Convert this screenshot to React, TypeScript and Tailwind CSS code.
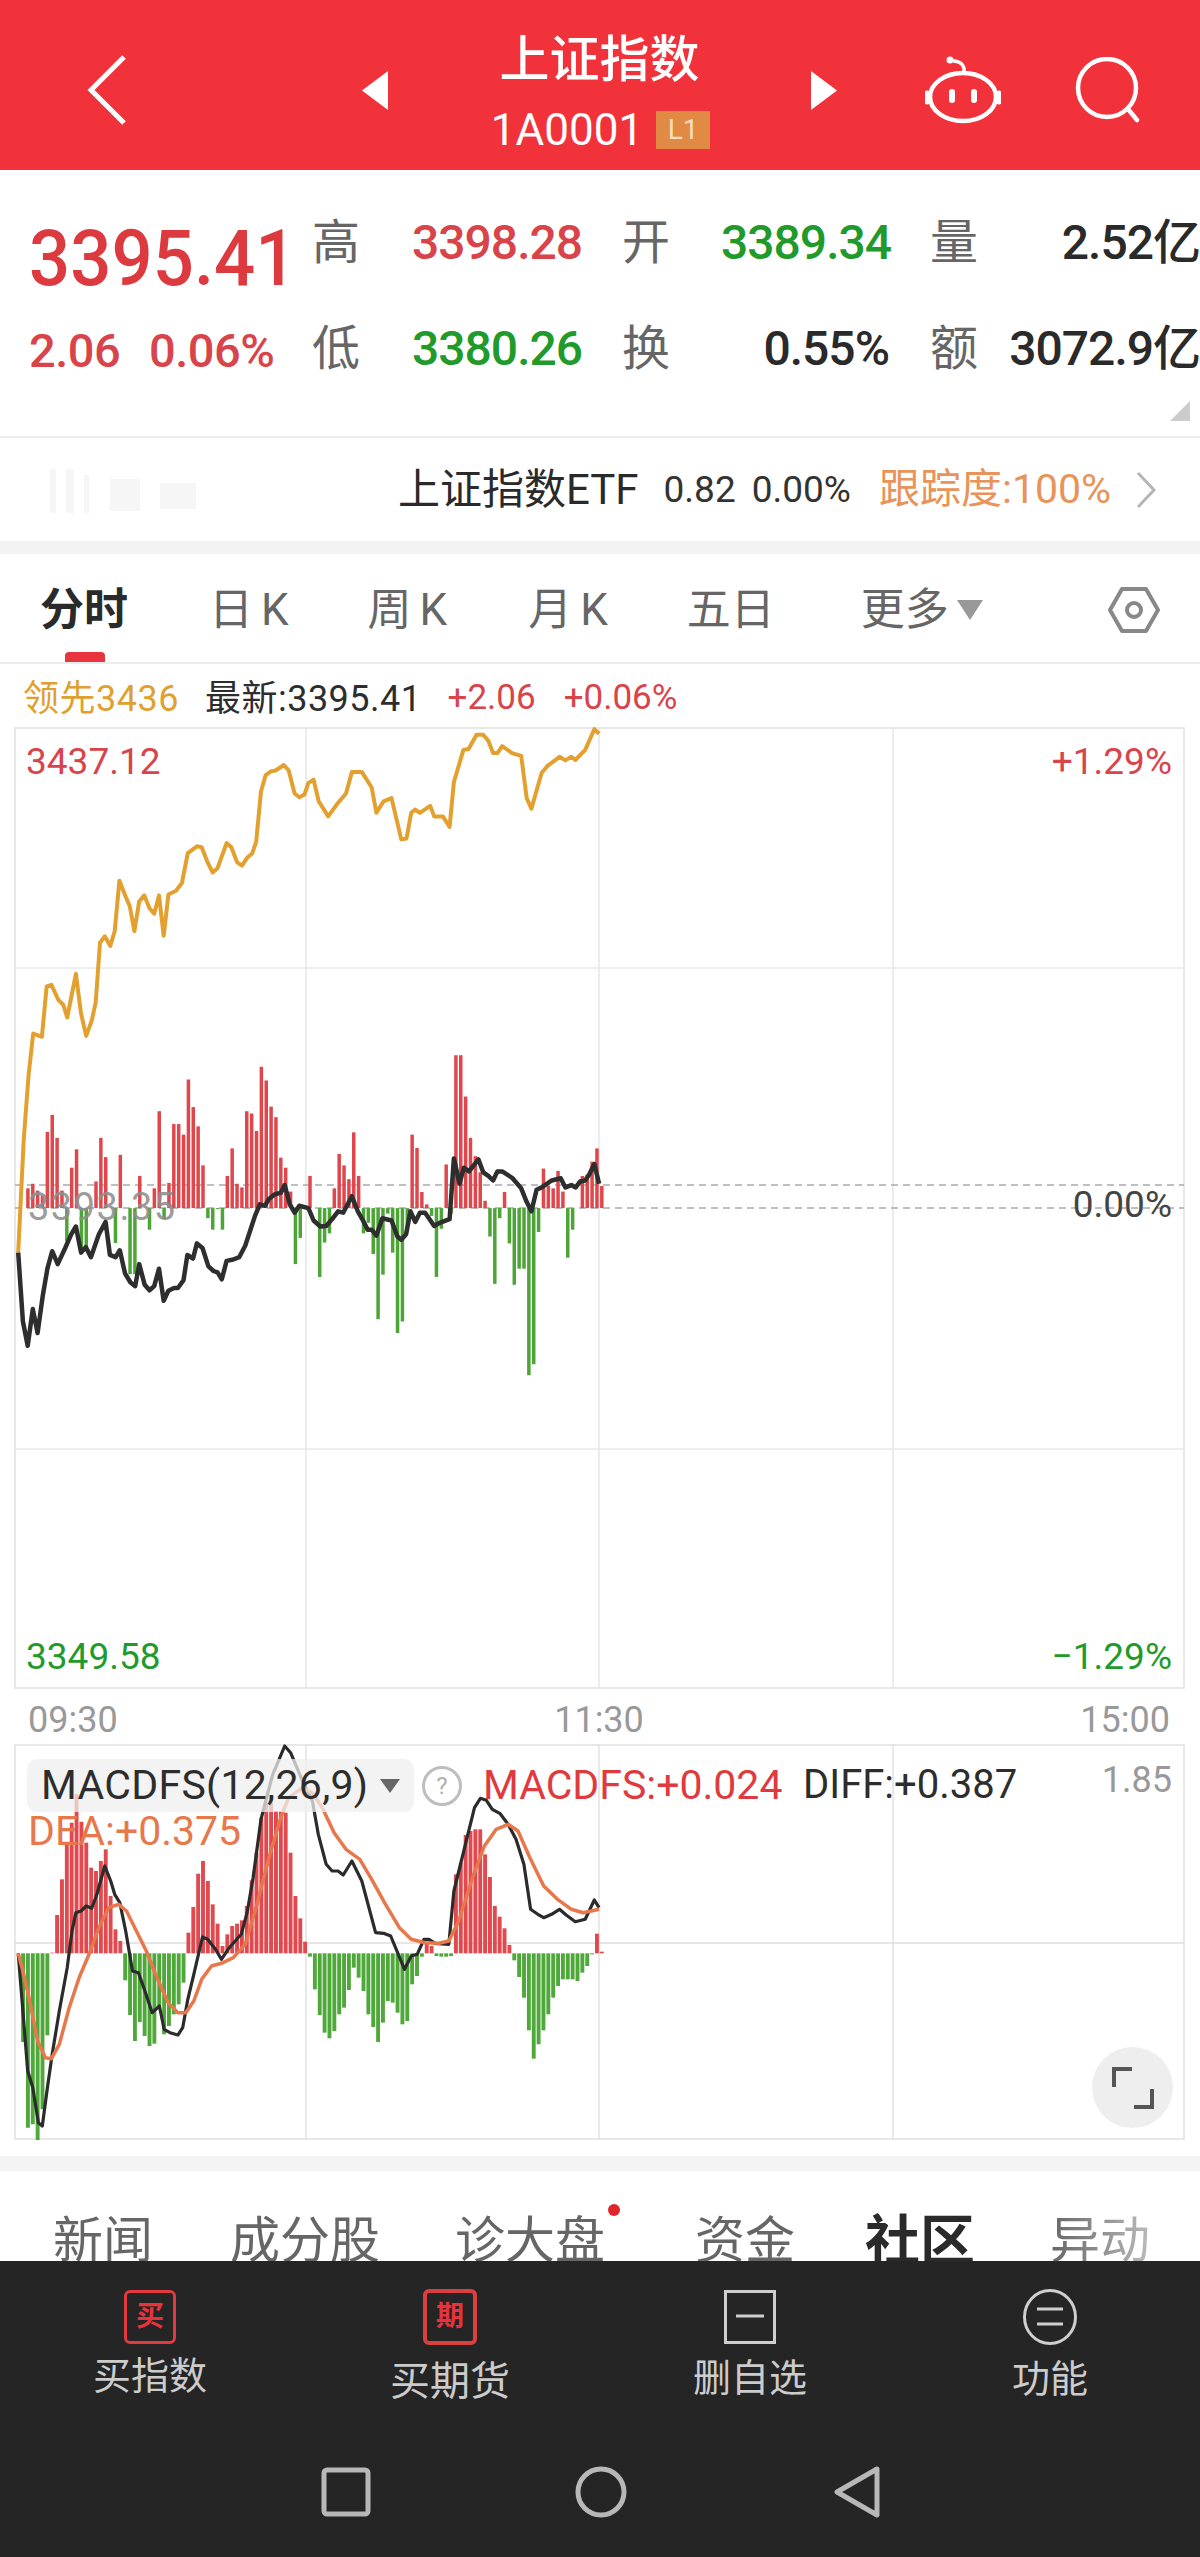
import type { ReactNode } from 'react'

const sx = 2.529
// chart data was read off the reference, in zoomed crop units
const volTops = [1148,1148,1105,1095,1110,1120,982,945,995,1110,1220,1060,1020,1240,1233,1148,1090,995,1037,1148,1224,1032,1148,1292,1292,1078,1148,1195,1105,937,1172,1093,965,965,988,868,928,970,1055,1170,1195,1150,1195,1078,1018,1095,1103,937,942,980,840,870,927,950,1038,1060,1112,1270,1213,1148,1078,1148,1298,1223,1203,1105,1030,1055,1085,983,1078,1203,1180,1248,1390,1293,1160,1245,1420,1395,1200,988,1017,1113,1140,1165,1298,1193,1053,1160,815,815,905,995,1035,1070,1132,1210,1313,1170,1113,1225,1315,1280,1280,1512,1488,1200,1062,1100,1105,1067,1112,1256,1195,1148,1078,1075,1047,1018,1100]
const macdTops = [787,1053,1310,1300,1347,1255,1033,785,672,565,460,395,310,392,455,530,540,510,475,615,715,750,868,972,1050,993,1035,1065,1058,945,1030,1005,970,940,875,725,648,548,510,570,640,698,765,730,705,698,688,645,568,485,380,335,335,360,360,365,485,615,682,752,797,895,972,1025,1042,1020,970,950,897,830,860,900,970,1008,1053,995,930,935,965,1000,990,880,855,797,755,765,795,797,797,795,550,515,432,420,415,415,490,558,645,677,712,762,808,858,920,1018,1103,1060,1018,970,920,885,865,865,865,870,845,825,790,728,782]

const goldLine = [46,1245,60,1000,72,860,84,768,106,775,118,665,130,662,148,695,160,705,170,733,192,638,205,725,218,773,232,740,242,700,253,570,265,556,279,577,290,545,302,435,318,470,328,490,340,545,352,480,365,467,378,495,390,507,402,467,414,555,426,465,445,457,460,440,475,375,498,360,510,362,525,395,538,417,550,408,573,353,585,362,600,395,612,402,625,385,638,375,648,350,660,240,672,205,685,197,697,195,718,183,730,195,745,245,757,253,770,247,780,222,793,215,806,262,830,295,855,265,875,245,890,198,915,198,940,232,952,287,970,262,990,255,1015,345,1028,343,1040,287,1050,280,1062,287,1088,272,1098,295,1120,295,1137,318,1148,220,1172,150,1185,148,1205,117,1222,117,1235,130,1247,157,1258,157,1270,142,1295,157,1318,163,1332,255,1344,278,1370,200,1385,185,1415,165,1430,173,1445,165,1455,172,1480,150,1503,105,1515,115]
const blackLine = [46,1245,58,1395,70,1448,83,1368,95,1420,108,1340,120,1280,132,1242,146,1270,165,1235,180,1205,192,1188,205,1245,217,1233,230,1255,250,1205,267,1178,278,1250,292,1255,303,1240,316,1290,330,1310,342,1318,352,1270,366,1315,378,1327,390,1318,402,1280,414,1350,426,1328,440,1322,450,1322,464,1305,474,1250,488,1258,498,1225,512,1235,527,1275,540,1285,550,1288,561,1303,573,1263,590,1260,605,1255,620,1230,645,1165,657,1140,670,1143,680,1128,695,1118,710,1115,720,1098,733,1140,745,1158,757,1143,780,1148,793,1175,810,1188,825,1187,840,1172,855,1155,868,1158,890,1122,905,1155,918,1175,930,1195,940,1195,952,1208,967,1170,990,1175,1005,1210,1015,1217,1027,1205,1038,1155,1050,1178,1062,1158,1075,1158,1098,1187,1112,1180,1137,1172,1148,1040,1162,1095,1173,1060,1186,1068,1210,1042,1222,1070,1235,1078,1247,1088,1258,1068,1270,1068,1295,1082,1318,1105,1332,1135,1344,1155,1357,1108,1370,1103,1395,1088,1418,1083,1430,1103,1445,1098,1456,1103,1467,1090,1480,1088,1490,1075,1503,1052,1515,1095]
const macdBlack = [46,787,58,960,70,1140,83,1190,97,1295,107,1305,120,1190,132,1090,150,960,170,830,182,720,192,665,205,660,218,645,232,652,245,610,265,525,280,570,290,610,303,635,318,720,335,840,350,845,365,895,385,965,403,945,415,1015,430,1025,450,1032,462,1010,475,925,490,850,512,738,525,745,545,775,560,805,580,770,610,730,625,665,640,560,660,385,672,330,690,250,720,165,735,185,765,270,790,330,805,430,825,520,840,540,855,540,868,552,890,510,915,570,950,725,970,727,988,735,1023,835,1040,795,1055,790,1072,745,1085,745,1100,757,1135,760,1148,600,1175,470,1200,350,1215,322,1230,328,1245,355,1265,368,1285,400,1305,445,1325,520,1342,655,1360,670,1375,680,1395,670,1415,655,1432,672,1455,692,1480,685,1503,627,1515,650]
const macdOrange = [46,787,60,850,75,930,95,1050,115,1100,130,1103,150,1060,175,950,200,860,225,790,250,710,275,650,300,640,320,660,345,720,370,780,395,855,425,935,450,965,470,965,490,930,510,865,535,825,560,817,590,800,620,760,650,640,680,500,710,380,730,320,765,290,790,305,815,350,845,425,875,475,910,505,940,565,975,640,1010,710,1040,745,1075,755,1110,757,1135,750,1160,690,1195,560,1225,465,1255,415,1285,400,1310,420,1340,500,1375,585,1410,625,1445,655,1475,665,1515,655]

function toPoints(line: number[], y0: number, sy: number) {
  const out: string[] = []
  for (let i = 0; i < line.length; i += 2) {
    out.push(`${(line[i] / sx).toFixed(1)},${(y0 + line[i + 1] / sy).toFixed(1)}`)
  }
  return out.join(' ')
}

function Bars({ tops, base, y0, sy, red, green, w }: { tops: number[]; base: number; y0: number; sy: number; red: string; green: string; w: number }) {
  return (
    <>
      {tops.map((t, i) => {
        if (t === base) return null
        const x = (46 + 12.3 * i) / sx
        const a = y0 + base / sy
        const b = y0 + t / sy
        return <line key={i} x1={x} x2={x} y1={a} y2={b} stroke={t < base ? red : green} strokeWidth={w} />
      })}
    </>
  )
}

function MainChart() {
  return (
    <svg className="absolute inset-0" width={1171} height={962} viewBox="14 726 1171 962">
      <rect x={15} y={727} width={1169} height={960} fill="none" stroke="#e8e8e8" strokeWidth={2} />
      <line x1={306} x2={306} y1={727} y2={1687} stroke="#e6e6e6" strokeWidth={1.5} />
      <line x1={599} x2={599} y1={727} y2={1687} stroke="#e6e6e6" strokeWidth={1.5} />
      <line x1={893} x2={893} y1={727} y2={1687} stroke="#e6e6e6" strokeWidth={1.5} />
      <line x1={15} x2={1184} y1={967} y2={967} stroke="#e8e8e8" strokeWidth={1.5} />
      <line x1={15} x2={1184} y1={1448} y2={1448} stroke="#e8e8e8" strokeWidth={1.5} />
      <line x1={15} x2={1184} y1={1184} y2={1184} stroke="#aaaaaa" strokeWidth={1.5} strokeDasharray="7 5" />
      <line x1={15} x2={1184} y1={1207} y2={1207} stroke="#aaaaaa" strokeWidth={1.5} strokeDasharray="7 5" />
      <Bars tops={volTops} base={1148} y0={680} sy={2.178} red="#e0474c" green="#4da537" w={3.5} />
      <polyline points={toPoints(goldLine, 680, 2.178)} fill="none" stroke="#e3a02f" strokeWidth={4} strokeLinejoin="round" />
      <polyline points={toPoints(blackLine, 680, 2.178)} fill="none" stroke="#2e2e2e" strokeWidth={4.5} strokeLinejoin="round" />
    </svg>
  )
}

function MacdChart() {
  return (
    <svg className="absolute inset-0" width={1171} height={396} viewBox="14 1743 1171 396">
      <rect x={15} y={1744} width={1169} height={394} fill="none" stroke="#e8e8e8" strokeWidth={2} />
      <line x1={306} x2={306} y1={1744} y2={2138} stroke="#e2e2e2" strokeWidth={1.5} />
      <line x1={599} x2={599} y1={1744} y2={2138} stroke="#e2e2e2" strokeWidth={1.5} />
      <line x1={893} x2={893} y1={1744} y2={2138} stroke="#e2e2e2" strokeWidth={1.5} />
      <line x1={15} x2={1184} y1={1942} y2={1942} stroke="#dedede" strokeWidth={1.5} />
      <Bars tops={macdTops} base={787} y0={1690} sy={3} red="#e0494e" green="#4fa83a" w={3.9} />
      <polyline points={toPoints(macdBlack, 1690, 3)} fill="none" stroke="#2b2b2b" strokeWidth={3.2} strokeLinejoin="round" />
      <polyline points={toPoints(macdOrange, 1690, 3)} fill="none" stroke="#e8774b" strokeWidth={3.5} strokeLinejoin="round" />
    </svg>
  )
}

function RobotIcon() {
  return (
    <svg width={76} height={70} viewBox="0 0 76 70" fill="none" stroke="white" strokeWidth={4.5} strokeLinecap="round">
      <ellipse cx={38} cy={42} rx={33} ry={24} />
      <path d="M2 38v9M74 38v9" strokeWidth={5} />
      <path d="M39 18c1-7-2-11-10-12" strokeWidth={3.5} />
      <circle cx={25} cy={5} r={3.5} fill="white" stroke="none" />
      <rect x={24} y={34} width={6} height={14} rx={3} fill="white" stroke="none" />
      <rect x={46} y={34} width={6} height={14} rx={3} fill="white" stroke="none" />
    </svg>
  )
}

function SearchIcon() {
  return (
    <svg width={66} height={66} viewBox="0 0 66 66" fill="none" stroke="white" strokeWidth={4.5} strokeLinecap="round">
      <circle cx={32} cy={31} r={29} />
      <path d="M53 52l9 11" />
    </svg>
  )
}

function Header() {
  return (
    <div className="flex h-[170px] items-center bg-[#f1323b] pt-[10px] text-white">
      <svg className="ml-[86px] shrink-0" width={42} height={72} viewBox="0 0 42 72" fill="none" stroke="white" strokeWidth={5}>
        <path d="M38 3L5 36l33 33" />
      </svg>
      <svg className="ml-[234px] shrink-0" width={26} height={39} viewBox="0 0 26 39"><path d="M26 0v39L0 19.5z" fill="white" /></svg>
      <div className="flex w-[423px] flex-col items-center pt-[2px]">
        <div className="text-[50px] font-medium leading-[60px]">上证指数</div>
        <div className="mt-[18px] flex items-center gap-[13px] pl-[2px]">
          <span className="text-[44px] leading-[44px]">1A0001</span>
          <span className="flex h-[38px] w-[54px] items-center justify-center bg-[#e08a44] text-[28px] leading-none text-[#f8dcc0]">L1</span>
        </div>
      </div>
      <svg className="shrink-0" width={26} height={39} viewBox="0 0 26 39"><path d="M0 0v39L26 19.5z" fill="white" /></svg>
      <div className="ml-[88px] shrink-0"><RobotIcon /></div>
      <div className="ml-[74px] shrink-0"><SearchIcon /></div>
    </div>
  )
}

function QuoteRow({ a, b, c, d, e, f, bColor, dColor }: { a: string; b: string; c: string; d: string; e: string; f: string; bColor: string; dColor: string }) {
  return (
    <div className="flex h-[106px] items-center">
      <span className="w-[100px] text-[48px] text-[#666666]">{a}</span>
      <span className={`w-[210px] text-[48px] font-medium tracking-[-1px] ${bColor}`}>{b}</span>
      <span className="w-[99px] text-[48px] text-[#666666]">{c}</span>
      <span className={`w-[168px] text-right text-[48px] font-medium tracking-[-1px] ${dColor}`}>{d}</span>
      <span className="ml-[41px] w-[62px] text-[48px] text-[#666666]">{e}</span>
      <span className="flex-1 whitespace-nowrap text-right text-[48px] font-medium tracking-[-1px] text-[#2a2a2a]">{f}</span>
    </div>
  )
}

function Quote() {
  return (
    <div className="relative flex h-[268px] border-b-2 border-[#ececec] pt-[20px]">
      <div className="w-[312px] shrink-0 pl-[29px]">
        <div className="mt-[31px] origin-left scale-x-[0.93] text-[78px] font-medium leading-[76px] text-[#dc3a3e]">3395.41</div>
        <div className="mt-[29px] flex text-[47px] font-medium leading-[50px] tracking-[-0.5px] text-[#d9434a]">
          <span className="w-[120px]">2.06</span>
          <span>0.06%</span>
        </div>
      </div>
      <div className="w-[888px]">
        <QuoteRow a="高" b="3398.28" c="开" d="3389.34" e="量" f="2.52亿" bColor="text-[#d9434a]" dColor="text-[#1f9a2b]" />
        <QuoteRow a="低" b="3380.26" c="换" d="0.55%" e="额" f="3072.9亿" bColor="text-[#1f9a2b]" dColor="text-[#2a2a2a]" />
      </div>
      <svg className="absolute bottom-[15px] right-[10px]" width={20} height={20} viewBox="0 0 20 20"><path d="M20 0v20H0z" fill="#cccccc" /></svg>
    </div>
  )
}

function EtfRow() {
  return (
    <div className="flex h-[103px] items-center whitespace-nowrap">
      <svg className="ml-[40px] shrink-0" width={190} height={50} viewBox="0 0 190 50" fill="#f6f6f6">
        <rect x={10} y={4} width={6} height={44} /><rect x={26} y={4} width={8} height={44} /><rect x={44} y={10} width={5} height={38} />
        <rect x={70} y={14} width={30} height={32} /><rect x={120} y={18} width={36} height={26} />
      </svg>
      <span className="ml-[168px] text-[42px] text-[#2a2a2a]">上证指数ETF</span>
      <span className="ml-[25px] text-[37px] text-[#333333]">0.82</span>
      <span className="ml-[16px] text-[37px] text-[#333333]">0.00%</span>
      <span className="ml-[28px] text-[41px] text-[#e8935a]">跟踪度:100%</span>
      <svg className="ml-[24px] shrink-0" width={22} height={38} viewBox="0 0 22 38" fill="none" stroke="#b5b5b5" strokeWidth={3}>
        <path d="M3 2l16 17L3 36" />
      </svg>
    </div>
  )
}

function Tabs() {
  const base = 'text-[44px] leading-[56px] text-[#666666]'
  return (
    <div className="relative flex h-[110px] items-center border-b-2 border-[#ececec] pt-[4px]">
      <span className="ml-[40px] text-[44px] font-bold leading-[56px] text-[#2a2a2a]">分时</span>
      <span className={`ml-[81px] ${base}`}>日<span className="ml-[8px]">K</span></span>
      <span className={`ml-[79px] ${base}`}>周<span className="ml-[8px]">K</span></span>
      <span className={`ml-[81px] ${base}`}>月<span className="ml-[8px]">K</span></span>
      <span className={`ml-[79px] ${base}`}>五日</span>
      <span className={`ml-[86px] ${base}`}>更多</span>
      <svg className="ml-[8px] shrink-0" width={26} height={20} viewBox="0 0 26 20"><path d="M0 0h26L13 20z" fill="#999999" /></svg>
      <svg className="ml-[125px] shrink-0" width={52} height={48} viewBox="0 0 52 48" fill="none" stroke="#888888" strokeWidth={4}>
        <path d="M14 3h24l12 21-12 21H14L2 24z" strokeLinejoin="round" />
        <circle cx={26} cy={24} r={7} />
      </svg>
      <div className="absolute bottom-0 left-[65px] h-[10px] w-[40px] rounded-t-[4px] bg-[#e8343c]" />
    </div>
  )
}

function Legend() {
  return (
    <div className="flex h-[63px] items-center whitespace-nowrap pl-[23px] pt-[6px] text-[35px]">
      <span className="text-[36px] tracking-[0.5px] text-[#e0a030]">领先3436</span>
      <span className="ml-[26px] text-[36px] tracking-[0.5px] text-[#2d2d2d]">最新:3395.41</span>
      <span className="ml-[26px] text-[#d9434a]">+2.06</span>
      <span className="ml-[28px] text-[#d9434a]">+0.06%</span>
    </div>
  )
}

function BottomTabs() {
  const base = 'text-[50px] text-[#666666]'
  return (
    <div className="flex h-[90px] overflow-hidden whitespace-nowrap pt-[40px] leading-[60px]">
      <span className={`ml-[53px] ${base}`}>新闻</span>
      <span className={`ml-[77px] ${base}`}>成分股</span>
      <span className={`ml-[75px] ${base}`}>诊大盘</span>
      <span className="relative h-0 w-0"><span className="absolute left-[3px] top-[-7px] h-[12px] w-[12px] rounded-full bg-[#e0252d]" /></span>
      <span className={`ml-[90px] ${base}`}>资金</span>
      <span className="ml-[70px] text-[55px] font-bold text-[#2a2a2a]">社区</span>
      <span className="ml-[75px] bg-gradient-to-r from-[#666666] to-[#bbbbbb] bg-clip-text text-[50px] text-transparent">异动</span>
    </div>
  )
}

function NavItem({ icon, label, top, size }: { icon: ReactNode; label: string; top: string; size: string }) {
  return (
    <div className="flex w-[300px] flex-col items-center">
      <div className="flex h-[58px] items-center">{icon}</div>
      <span className={`${top} ${size} whitespace-nowrap leading-[44px] text-[#cccccc]`}>{label}</span>
    </div>
  )
}

function BottomBar() {
  return (
    <div className="flex h-[296px] flex-col bg-[#252525]">
      <div className="flex pt-[27px]">
        <NavItem
          label="买指数"
          top="mt-[8px]"
          size="text-[38px]"
          icon={<span className="flex h-[54px] w-[52px] items-center justify-center rounded-[6px] border-[3px] border-[#e23a3f] text-[28px] font-bold leading-none text-[#e8333c]">买</span>}
        />
        <NavItem
          label="买期货"
          top="mt-[14px]"
          size="text-[40px]"
          icon={<span className="flex h-[56px] w-[54px] items-center justify-center rounded-[6px] border-[4px] border-[#d9403f] text-[28px] font-bold leading-none text-[#e8333c]">期</span>}
        />
        <NavItem
          label="删自选"
          top="mt-[10px]"
          size="text-[38px]"
          icon={
            <svg width={52} height={54} viewBox="0 0 52 54" fill="none" stroke="#cfcfcf" strokeWidth={3}>
              <rect x={1.5} y={1.5} width={49} height={51} />
              <path d="M12 26h28" />
            </svg>
          }
        />
        <NavItem
          label="功能"
          top="mt-[11px]"
          size="text-[38px]"
          icon={
            <svg width={54} height={56} viewBox="0 0 54 56" fill="none" stroke="#cfcfcf" strokeWidth={3}>
              <ellipse cx={27} cy={28} rx={25.5} ry={26.5} />
              <path d="M14 20h26M14 35h26" />
            </svg>
          }
        />
      </div>
      <div className="mt-[62px] flex items-center justify-center">
        <svg width={50} height={50} viewBox="0 0 50 50" fill="none" stroke="#b8b8b8" strokeWidth={5}>
          <rect x={3} y={3} width={44} height={44} rx={3} />
        </svg>
        <svg className="ml-[204px]" width={52} height={52} viewBox="0 0 52 52" fill="none" stroke="#b8b8b8" strokeWidth={5}>
          <circle cx={26} cy={26} r={23} />
        </svg>
        <svg className="ml-[207px]" width={46} height={52} viewBox="0 0 46 52" fill="none" stroke="#b8b8b8" strokeWidth={5} strokeLinejoin="round">
          <path d="M43 3L3 26l40 23z" />
        </svg>
      </div>
    </div>
  )
}

export default function App() {
  return (
    <div className="h-[2557px] w-[1200px] overflow-hidden bg-white font-['Roboto','Noto_Sans_CJK_SC',sans-serif]">
      <Header />
      <Quote />
      <EtfRow />
      <div className="h-[13px] bg-[#f3f3f3]" />
      <Tabs />
      <Legend />

      {/* main time-share chart */}
      <div className="relative ml-[14px] h-[962px] w-[1171px] whitespace-nowrap text-[37px] leading-none">
        <MainChart />
        <span className="absolute left-[12px] top-[16px] text-[#d9434a]">3437.12</span>
        <span className="absolute right-[13px] top-[16px] text-[#d9434a]">+1.29%</span>
        <span className="absolute left-[14px] top-[461px] text-[38px] tracking-[1.5px] text-[#8e8e8e]/90">3393.35</span>
        <span className="absolute right-[13px] top-[459px] text-[#444444]">0.00%</span>
        <span className="absolute left-[12px] top-[911px] text-[#1f9a2b]">3349.58</span>
        <span className="absolute right-[13px] top-[911px] text-[#1f9a2b]">−1.29%</span>
      </div>

      <div className="flex h-[55px] items-center justify-between whitespace-nowrap pl-[28px] pr-[30px] pt-[6px] text-[36px] text-[#999999]">
        <span>09:30</span>
        <span>11:30</span>
        <span>15:00</span>
      </div>

      {/* MACD panel */}
      <div className="relative ml-[14px] h-[396px] w-[1171px] whitespace-nowrap leading-none">
        <MacdChart />
        <div className="absolute left-[13px] top-[15px] flex h-[53px] w-[387px] items-center rounded-[10px] bg-[#efefef]/75 pl-[14px]">
          <span className="text-[41px] tracking-[0.3px] text-[#2d2d2d]">MACDFS(12,26,9)</span>
          <svg className="ml-[12px] shrink-0" width={20} height={14} viewBox="0 0 20 14"><path d="M0 0h20L10 14z" fill="#666666" /></svg>
        </div>
        <span className="absolute left-[408px] top-[22px] flex h-[40px] w-[40px] items-center justify-center rounded-full border-[3px] border-[#bdbdbd] text-[24px] text-[#b0b0b0]">?</span>
        <span className="absolute left-[469px] top-[21px] text-[41px] text-[#e0393e]">MACDFS:+0.024</span>
        <span className="absolute left-[789px] top-[21px] text-[40px] text-[#2d2d2d]">DIFF:+0.387</span>
        <span className="absolute right-[13px] top-[18px] text-[36px] text-[#999999]">1.85</span>
        <span className="absolute left-[14px] top-[67px] text-[41px] text-[#e8774b]">DEA:+0.375</span>
        <div className="absolute left-[1078px] top-[303px] flex h-[81px] w-[81px] items-center justify-center rounded-full bg-[#eeeeee]">
          <svg width={42} height={42} viewBox="0 0 42 42" fill="none" stroke="#555555" strokeWidth={4}>
            <path d="M2 20V2h18M40 22v18H22" />
          </svg>
        </div>
      </div>

      <div className="h-[16px]" />
      <div className="h-[15px] bg-[#f4f4f4]" />
      <BottomTabs />
      <BottomBar />
    </div>
  )
}
